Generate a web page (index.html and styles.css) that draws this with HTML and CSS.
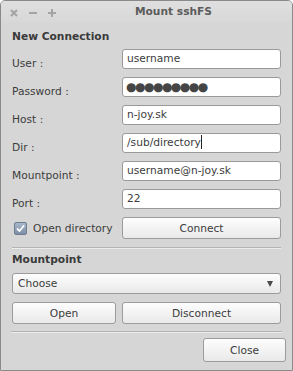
FILE: index.html
```html
<!DOCTYPE html>
<html lang="en">
<head>
  <meta charset="UTF-8">
  <title>Mount sshFS</title>
  <meta name="viewport" content="width=device-width, initial-scale=1">
  <link rel="stylesheet" href="styles.css">
</head>
<body>

<div class="window">
  <div class="titlebar">
    <div class="controls">
      <svg width="8" height="8" viewBox="0 0 8 8"><path d="M1 1L7 7M7 1L1 7" /></svg>
      <svg width="8" height="8" viewBox="0 0 8 8"><path d="M0 4H8" /></svg>
      <svg width="8" height="8" viewBox="0 0 8 8"><path d="M0 4H8M4 0V8" /></svg>
    </div>
    <div class="title">Mount sshFS</div>
  </div>

  <div class="content">
    <div class="section">New Connection</div>

    <div class="form">
      <div class="label">User :</div>
      <div class="field">username</div>

      <div class="label">Password :</div>
      <div class="field dots">●●●●●●●●●</div>

      <div class="label">Host :</div>
      <div class="field">n-joy.sk</div>

      <div class="label">Dir :</div>
      <div class="field">/sub/directory<span class="caret"></span></div>

      <div class="label">Mountpoint :</div>
      <div class="field">username@n-joy.sk</div>

      <div class="label">Port :</div>
      <div class="field">22</div>

      <div class="check">
        <span class="box">
          <svg width="9" height="9" viewBox="0 0 9 9"><path d="M1 4.5L3.5 7L8 1.5" /></svg>
        </span>
        Open directory
      </div>
      <button class="btn btn-tall">Connect</button>
    </div>

    <div class="sep sep-top"></div>

    <div class="section section-mount">Mountpoint</div>
    <div class="combo">
      <span>Choose</span>
      <span class="arrow"></span>
    </div>
    <div class="buttons">
      <button class="btn btn-tall">Open</button>
      <button class="btn btn-tall">Disconnect</button>
    </div>
  </div>

  <div class="actions">
    <div class="sep"></div>
    <div class="action-row">
      <button class="btn btn-close">Close</button>
    </div>
  </div>
</div>

</body>
</html>
```

FILE: styles.css
```css
body {
  margin: 0;
  background-color: #fff;
  font-family: 'DejaVu Sans', 'Liberation Sans', sans-serif;
  font-size: 8pt;
  color: #3c3c3c;
}
.window {
  box-sizing: border-box;
  width: 293px;
  height: 371px;
  border: 1px solid #8a8a8a;
  border-radius: 5px 5px 0 0;
  background-color: #d6d6d6;
  display: flex;
  flex-direction: column;
  overflow: hidden;
}
.titlebar {
  height: 21px;
  display: flex;
  align-items: center;
  background: linear-gradient(#dfdfdf, #d8d8d8);
}
.controls {
  display: flex;
  align-items: center;
  gap: 11px;
  padding-left: 9px;
  width: 47px;
  margin-top: 2px;
}
.controls svg path {
  stroke: #a4a4a4;
  stroke-width: 2;
  fill: none;
}
.title {
  flex: 1;
  text-align: center;
  font-weight: bold;
  color: #5c5c5c;
  padding-right: 2px;
}
.content {
  padding: 0 11px;
}
.section {
  margin-top: 8px;
  line-height: 13px;
  font-weight: bold;
  color: #3a3a3a;
}
.section-mount {
  margin-top: 4px;
}
.form {
  margin-top: 6px;
  display: grid;
  grid-template-columns: 110px 1fr;
  grid-template-rows: repeat(6, 20px) 22px;
  row-gap: 8px;
}
.label {
  align-self: end;
  line-height: 11px;
}
.field {
  box-sizing: border-box;
  height: 20px;
  line-height: 18px;
  padding-left: 4px;
  background-color: #fff;
  border: 1px solid #9a9a9a;
  border-radius: 3px;
  white-space: nowrap;
}
.dots {
  font-size: 12px;
  letter-spacing: -1.5px;
  color: #454545;
  padding-left: 3px;
}
.caret {
  display: inline-block;
  width: 1px;
  height: 14px;
  background-color: #222;
  vertical-align: -3px;
}
.check {
  display: flex;
  align-items: center;
  gap: 6px;
  padding-left: 2px;
}
.box {
  box-sizing: border-box;
  width: 13px;
  height: 13px;
  border: 1px solid #6d7c8e;
  border-radius: 2px;
  background: linear-gradient(#a9b8cb, #7d90a8);
  display: flex;
  align-items: center;
  justify-content: center;
}
.box svg path {
  stroke: #fff;
  stroke-width: 1.8;
  fill: none;
}
.btn {
  box-sizing: border-box;
  font-family: inherit;
  font-size: inherit;
  color: #3c3c3c;
  padding: 0;
  border: 1px solid #9c9c9c;
  border-radius: 3px;
  background: linear-gradient(#fdfdfd, #e9e9e9);
}
.btn-tall {
  height: 22px;
}
.sep {
  height: 0;
  border-top: 1px solid #b4b4b4;
  border-bottom: 1px solid #ececec;
}
.sep-top {
  margin-top: 8px;
}
.combo {
  box-sizing: border-box;
  margin-top: 7px;
  height: 21px;
  display: flex;
  align-items: center;
  justify-content: space-between;
  padding: 0 7px 0 5px;
  border: 1px solid #9c9c9c;
  border-radius: 3px;
  background: linear-gradient(#fdfdfd, #e9e9e9);
}
.arrow {
  width: 0;
  height: 0;
  border-left: 3.5px solid transparent;
  border-right: 3.5px solid transparent;
  border-top: 6px solid #4a4a4a;
}
.buttons {
  margin-top: 8px;
  display: grid;
  grid-template-columns: 104px 1fr;
  gap: 6px;
}
.actions {
  margin-top: 7px;
  padding: 0 10px;
}
.action-row {
  display: flex;
  justify-content: flex-end;
  margin-top: 5px;
  margin-right: -4px;
}
.btn-close {
  width: 83px;
  height: 24px;
}
```
